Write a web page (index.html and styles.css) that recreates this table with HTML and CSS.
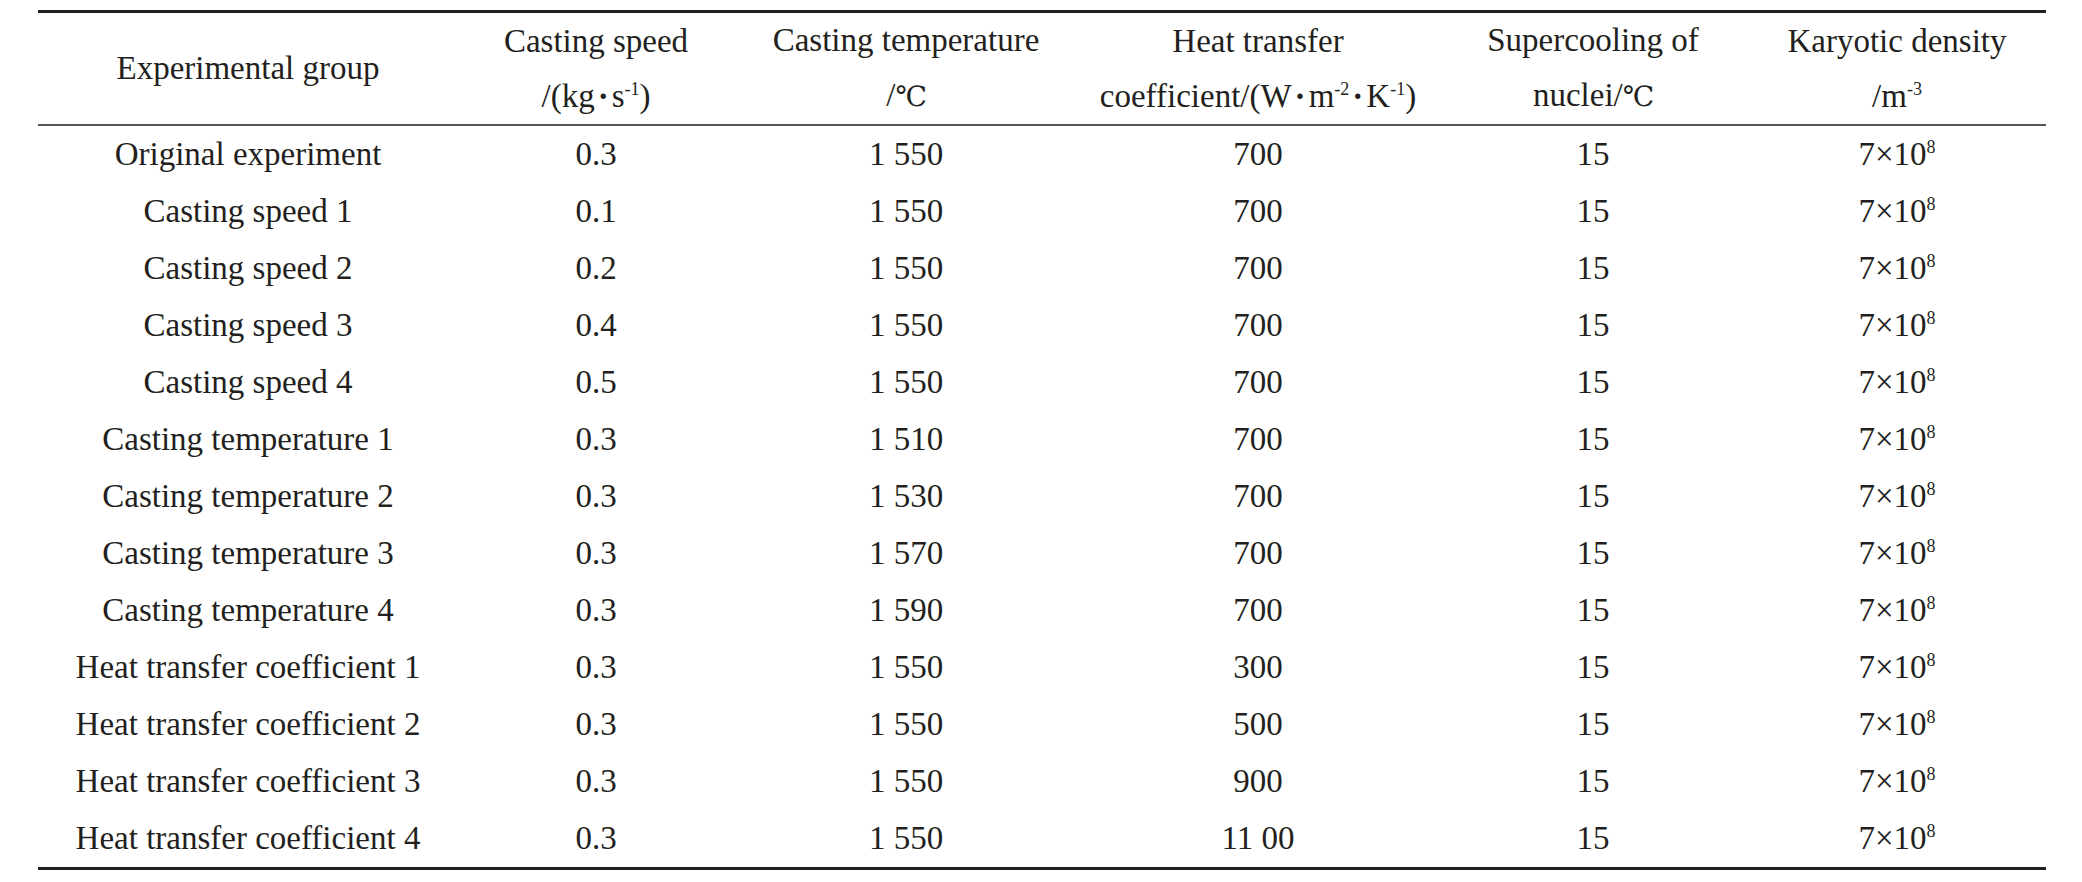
FILE: index.html
```html
<!DOCTYPE html>
<html>
<head>
<meta charset="utf-8">
<link rel="stylesheet" href="styles.css">
</head>
<body>
<table class="data">
  <colgroup>
    <col class="c1"><col class="c2"><col class="c3"><col class="c4"><col class="c5"><col class="c6">
  </colgroup>
  <thead>
    <tr>
      <th>Experimental group</th>
      <th>Casting speed<br>/(kg<span class="dot">·</span>s<sup>-1</sup>)</th>
      <th>Casting temperature<br>/<span class="deg">℃</span></th>
      <th>Heat transfer<br>coefficient/(W<span class="dot">·</span>m<sup>-2</sup><span class="dot">·</span>K<sup>-1</sup>)</th>
      <th>Supercooling of<br>nuclei/<span class="deg">℃</span></th>
      <th>Karyotic density<br>/m<sup>-3</sup></th>
    </tr>
  </thead>
  <tbody>
    <tr><td>Original experiment</td><td>0.3</td><td>1 550</td><td>700</td><td>15</td><td>7×10<sup>8</sup></td></tr>
    <tr><td>Casting speed 1</td><td>0.1</td><td>1 550</td><td>700</td><td>15</td><td>7×10<sup>8</sup></td></tr>
    <tr><td>Casting speed 2</td><td>0.2</td><td>1 550</td><td>700</td><td>15</td><td>7×10<sup>8</sup></td></tr>
    <tr><td>Casting speed 3</td><td>0.4</td><td>1 550</td><td>700</td><td>15</td><td>7×10<sup>8</sup></td></tr>
    <tr><td>Casting speed 4</td><td>0.5</td><td>1 550</td><td>700</td><td>15</td><td>7×10<sup>8</sup></td></tr>
    <tr><td>Casting temperature 1</td><td>0.3</td><td>1 510</td><td>700</td><td>15</td><td>7×10<sup>8</sup></td></tr>
    <tr><td>Casting temperature 2</td><td>0.3</td><td>1 530</td><td>700</td><td>15</td><td>7×10<sup>8</sup></td></tr>
    <tr><td>Casting temperature 3</td><td>0.3</td><td>1 570</td><td>700</td><td>15</td><td>7×10<sup>8</sup></td></tr>
    <tr><td>Casting temperature 4</td><td>0.3</td><td>1 590</td><td>700</td><td>15</td><td>7×10<sup>8</sup></td></tr>
    <tr><td>Heat transfer coefficient 1</td><td>0.3</td><td>1 550</td><td>300</td><td>15</td><td>7×10<sup>8</sup></td></tr>
    <tr><td>Heat transfer coefficient 2</td><td>0.3</td><td>1 550</td><td>500</td><td>15</td><td>7×10<sup>8</sup></td></tr>
    <tr><td>Heat transfer coefficient 3</td><td>0.3</td><td>1 550</td><td>900</td><td>15</td><td>7×10<sup>8</sup></td></tr>
    <tr><td>Heat transfer coefficient 4</td><td>0.3</td><td>1 550</td><td>11 00</td><td>15</td><td>7×10<sup>8</sup></td></tr>
  </tbody>
</table>
</body>
</html>
```
FILE: styles.css
```css
html, body {
  margin: 0;
  padding: 0;
  background: #ffffff;
}
body {
  font-family: "Liberation Serif", "Noto Sans CJK SC", serif;
  color: #231f20;
}
.data {
  margin: 10px 0 0 38px;
  width: 2008px;
  border-collapse: collapse;
  table-layout: fixed;
  border-top: 3px solid #231f20;
  border-bottom: 3px solid #231f20;
  font-size: 33px;
}
.c1 { width: 420px; }
.c2 { width: 276px; }
.c3 { width: 344px; }
.c4 { width: 360px; }
.c5 { width: 310px; }
.c6 { width: 298px; }
.data th,
.data td {
  padding: 0;
  text-align: center;
  vertical-align: middle;
  font-weight: normal;
  white-space: nowrap;
}
.data th {
  line-height: 55px;
  border-bottom: 2px solid #555555;
}
.data td {
  height: 57px;
  line-height: 57px;
}
.data sup {
  font-size: 18px;
  line-height: 0;
  vertical-align: 12px;
}
.dot {
  font-weight: bold;
  margin: 0 3px;
}
.deg {
  font-family: "DejaVu Serif", "DejaVu Sans", serif;
  font-size: 28px;
  letter-spacing: -1px;
}
```
